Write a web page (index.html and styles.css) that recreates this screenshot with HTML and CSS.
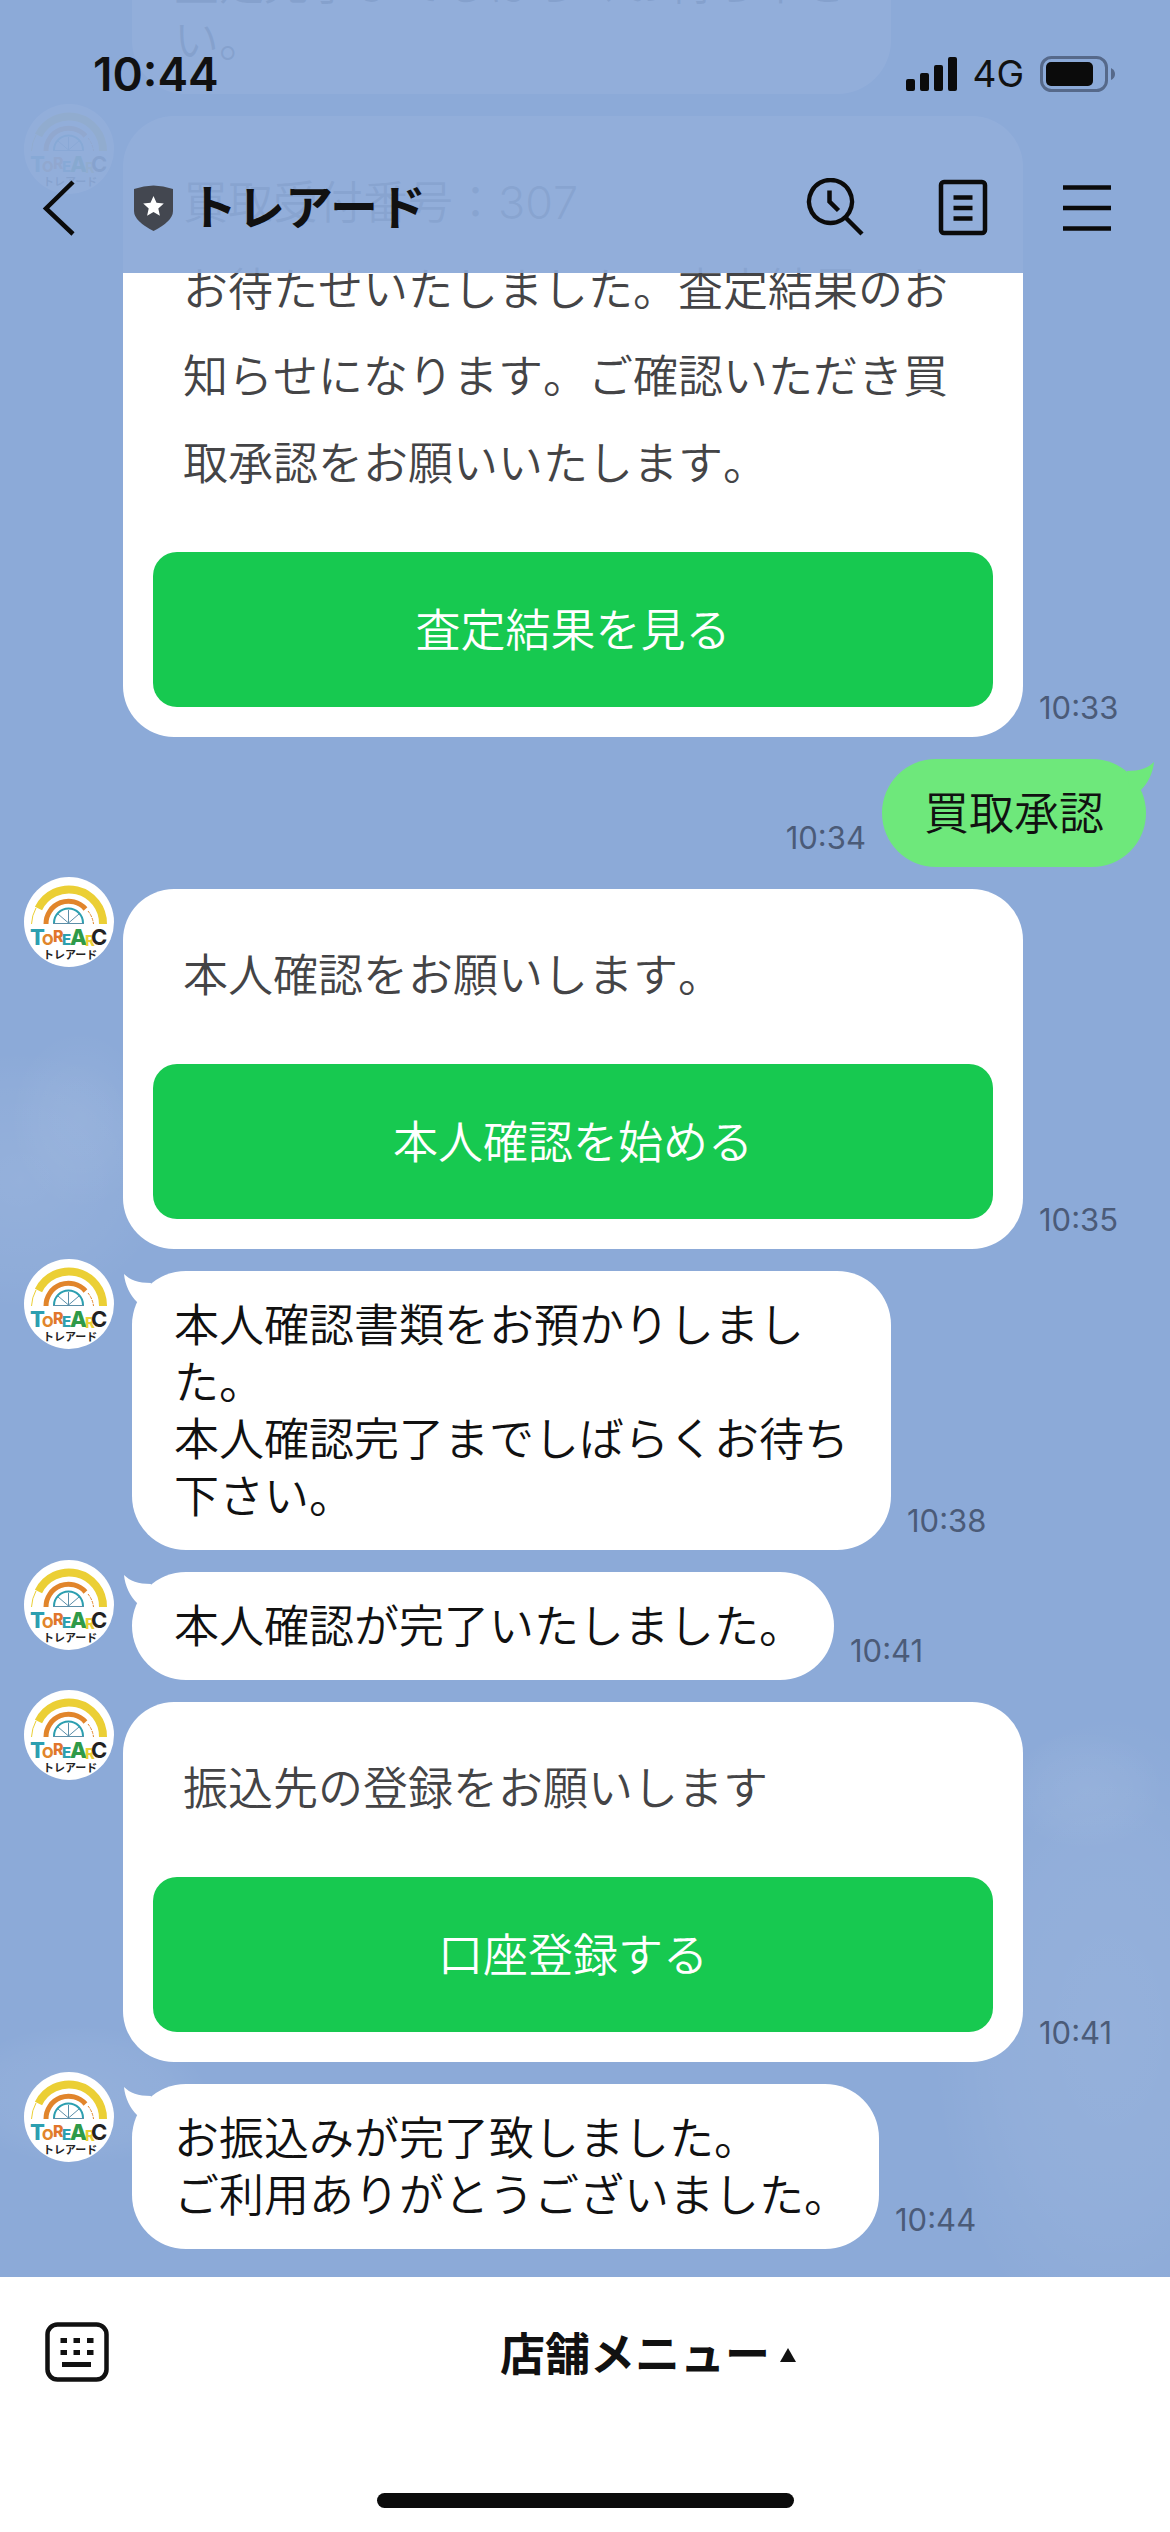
FILE: index.html
```html
<!DOCTYPE html>
<html lang="ja">
<head>
<meta charset="utf-8">
<meta name="viewport" content="width=device-width, initial-scale=1">
<title>トレアード</title>
<link rel="stylesheet" href="styles.css">
</head>
<body>
<svg width="0" height="0" class="defs" aria-hidden="true">
  <defs>
    <symbol id="logo" viewBox="0 0 90 90">
      <circle cx="45" cy="45" r="45" fill="#fff"/>
      <path d="M14.500 31.500A34 34 0 0 1 79 47" fill="none" stroke="#ebcf35" stroke-width="8"/>
      <path d="M7.500 47A37 37 0 0 1 12 31" fill="none" stroke="#ebcf35" stroke-width="1"/>
      <path d="M22 47A22.500 22.500 0 0 1 61.500 32" fill="none" stroke="#e1852b" stroke-width="5"/>
      <path d="M64 34A25 25 0 0 1 69.500 47" fill="none" stroke="#e1852b" stroke-width="1" stroke-dasharray="3 1"/>
      <path d="M30 46A14.500 14.500 0 0 1 59 46" fill="none" stroke="#2c9fb0" stroke-width="2"/>
      <path d="M29 46.500H60M44.500 46V33M44.500 46L34 37M44.500 46L55 37" fill="none" stroke="#5b8ea8" stroke-width="1"/>
      <g font-family="Inter, Liberation Sans, sans-serif" font-weight="800">
        <text x="6" y="68" font-size="22" fill="#2c9fb0">T</text>
        <text x="18" y="68" font-size="15" fill="#e1852b">O</text>
        <text x="29" y="65" font-size="16" fill="#e1752b">R</text>
        <text x="38" y="68" font-size="15" fill="#2c9fb0">E</text>
        <text x="46" y="68" font-size="22" fill="#2f9a48">A</text>
        <text x="61" y="69" font-size="15" fill="#ebcf35">R</text>
        <text x="67" y="68" font-size="22" font-weight="700" fill="#222">C</text>
      </g>
      <text x="19" y="82" font-size="11" font-weight="700" fill="#222" font-family="Noto Sans CJK JP, sans-serif">トレアード</text>
    </symbol>
    <symbol id="tail" viewBox="0 0 36 32">
      <path d="M0 0C6 6 14 9 27 9L24 28H13C6 21 1 11 0 0Z" fill="currentColor"/>
    </symbol>
  </defs>
</svg>

<header class="header">
  <div class="status">
    <time class="status-time">10:44</time>
    <div class="status-icons">
      <svg width="51" height="36" viewBox="0 0 51 36" aria-hidden="true"><path fill="#0b0b0b" d="M2 23h5a2 2 0 0 1 2 2v8a2 2 0 0 1-2 2H2a2 2 0 0 1-2-2v-8a2 2 0 0 1 2-2zM16 17h5a2 2 0 0 1 2 2v14a2 2 0 0 1-2 2h-5a2 2 0 0 1-2-2V19a2 2 0 0 1 2-2zM30 9h5a2 2 0 0 1 2 2v22a2 2 0 0 1-2 2h-5a2 2 0 0 1-2-2V11a2 2 0 0 1 2-2zM44 1h5a2 2 0 0 1 2 2v30a2 2 0 0 1-2 2h-5a2 2 0 0 1-2-2V3a2 2 0 0 1 2-2z"/></svg>
      <span class="status-net">4G</span>
      <svg width="76" height="36" viewBox="0 0 76 36" aria-hidden="true"><rect x="1.500" y="1.500" width="65" height="33" rx="10" fill="none" stroke="#56698a" stroke-width="3"/><rect x="6" y="6" width="47" height="24" rx="5" fill="#0b0b0b"/><path d="M71 12q4 2 4 6t-4 6z" fill="#56698a"/></svg>
    </div>
  </div>
  <div class="nav">
    <button class="icon-btn back" type="button" aria-label="戻る">
      <svg width="36" height="56" viewBox="0 0 36 56" aria-hidden="true"><path d="M33 2L6 28.500L33 54" fill="none" stroke="#0b0b0b" stroke-width="4.500"/></svg>
    </button>
    <svg class="shield" width="39" height="46" viewBox="0 0 39 46" aria-hidden="true"><path d="M0 4Q19.500-3 39 4V26Q39 36 19.500 46Q0 36 0 26Z" fill="#434750"/><path d="M19.500 11l3 6.800 7.300.7-5.500 4.900 1.600 7.400-6.400-3.900-6.400 3.900 1.600-7.400-5.500-4.900 7.300-.7z" fill="#fff"/></svg>
    <h1 class="title">トレアード</h1>
    <div class="tools">
      <button class="icon-btn" type="button" aria-label="検索">
        <svg width="58" height="60" viewBox="0 0 58 60" aria-hidden="true"><path d="M24.500 2a21.500 21.500 0 1 0 .01 0zM23.500 12.500v11l9 9M40 40L56 56" fill="none" stroke="#0b0b0b" stroke-width="4.500"/></svg>
      </button>
      <button class="icon-btn" type="button" aria-label="ノート">
        <svg width="50" height="60" viewBox="0 0 50 60" aria-hidden="true"><rect x="3" y="4" width="44" height="51" rx="3" fill="none" stroke="#0b0b0b" stroke-width="4.500"/><path d="M15.500 19.500h19M15.500 30h19M15.500 40.500h19" stroke="#0b0b0b" stroke-width="4.500"/></svg>
      </button>
      <button class="icon-btn" type="button" aria-label="メニュー">
        <svg width="50" height="60" viewBox="0 0 50 60" aria-hidden="true"><path d="M1 9.500h48M1 30h48M1 50.500h48" stroke="#0b0b0b" stroke-width="4.500"/></svg>
      </button>
    </div>
  </div>
</header>

<main class="chat">
  <div class="row">
    <svg class="avatar" role="img" aria-label="トレアード"><use href="#logo"/></svg>
    <div class="bubble">受付が完了いたしました。<br>査定完了までしばらくお待ち下さ<br>い。</div>
  </div>
  <div class="row">
    <svg class="avatar" role="img" aria-label="トレアード"><use href="#logo"/></svg>
    <section class="card">
      <p class="card-text">買取受付番号：307<br>お待たせいたしました。査定結果のお知らせになります。ご確認いただき買取承認をお願いいたします。</p>
      <button class="card-btn" type="button">査定結果を見る</button>
    </section>
    <time class="stamp">10:33</time>
  </div>
  <div class="row row-mine">
    <time class="stamp">10:34</time>
    <div class="bubble bubble-mine">買取承認<svg class="tail" aria-hidden="true"><use href="#tail"/></svg></div>
  </div>
  <div class="row">
    <svg class="avatar" role="img" aria-label="トレアード"><use href="#logo"/></svg>
    <section class="card">
      <p class="card-text">本人確認をお願いします。</p>
      <button class="card-btn" type="button">本人確認を始める</button>
    </section>
    <time class="stamp">10:35</time>
  </div>
  <div class="row">
    <svg class="avatar" role="img" aria-label="トレアード"><use href="#logo"/></svg>
    <div class="bubble">本人確認書類をお預かりしまし<br>た。<br>本人確認完了までしばらくお待ち<br>下さい。<svg class="tail" aria-hidden="true"><use href="#tail"/></svg></div>
    <time class="stamp">10:38</time>
  </div>
  <div class="row">
    <svg class="avatar" role="img" aria-label="トレアード"><use href="#logo"/></svg>
    <div class="bubble bubble-tight">本人確認が完了いたしました。<svg class="tail" aria-hidden="true"><use href="#tail"/></svg></div>
    <time class="stamp">10:41</time>
  </div>
  <div class="row">
    <svg class="avatar" role="img" aria-label="トレアード"><use href="#logo"/></svg>
    <section class="card">
      <p class="card-text">振込先の登録をお願いします</p>
      <button class="card-btn" type="button">口座登録する</button>
    </section>
    <time class="stamp">10:41</time>
  </div>
  <div class="row">
    <svg class="avatar" role="img" aria-label="トレアード"><use href="#logo"/></svg>
    <div class="bubble bubble-tight">お振込みが完了致しました。<br>ご利用ありがとうございました。<svg class="tail" aria-hidden="true"><use href="#tail"/></svg></div>
    <time class="stamp">10:44</time>
  </div>
</main>

<footer class="footer">
  <div class="footer-bar">
    <button class="icon-btn keyboard" type="button" aria-label="キーボード">
      <svg width="64" height="60" viewBox="0 0 64 60" aria-hidden="true"><rect x="2.500" y="2.500" width="59" height="55" rx="10" fill="none" stroke="#111" stroke-width="4.500"/><path d="M15.500 18.500h6.500M28.500 18.500h6.500M42 18.500h6.500M15.500 30.500h6.500M28.500 30.500h6.500M42 30.500h6.500M17 42.500h29" stroke="#111" stroke-width="5"/></svg>
    </button>
    <button class="menu-btn" type="button">店舗メニュー<svg width="16" height="14" viewBox="0 0 16 14" aria-hidden="true"><path d="M8 0l8 14H0z" fill="#111"/></svg></button>
  </div>
  <div class="home"></div>
</footer>
</body>
</html>
```
FILE: styles.css
```css
* {
  box-sizing: border-box;
}

body {
  margin: 0;
  height: 100vh;
  display: flex;
  flex-direction: column;
  position: relative;
  color: #111;
  background: #8caad8;
  font-family: Inter, "Noto Sans CJK JP", sans-serif;
}

button {
  border: 0;
  padding: 0;
  background: none;
  color: inherit;
  font: inherit;
}

svg {
  display: block;
}

.defs {
  position: absolute;
}

/* translucent bar over the scrolled conversation */
.header {
  position: absolute;
  top: 0;
  left: 0;
  right: 0;
  z-index: 2;
  height: 273px;
  background: rgba(140, 170, 216, 0.95);
}

.status {
  display: flex;
  justify-content: space-between;
  align-items: center;
  padding: 44px 54px 0 93px;
  height: 104px;
}

.status-time {
  font-size: 46px;
  line-height: 60px;
  font-weight: 600;
}

.status-icons {
  display: flex;
  align-items: center;
}

.status-net {
  margin: 0 16px 0 15px;
  font-size: 37px;
  line-height: 44px;
  font-weight: 400;
}

.nav {
  display: flex;
  align-items: center;
  height: 160px;
  padding: 48px 58px 0 40px;
}

.back {
  margin-right: 58px;
}

.title {
  flex: 1;
  margin: 0 0 0 16px;
  font-size: 48px;
  line-height: 60px;
  font-weight: 700;
}

.tools {
  display: flex;
  gap: 74px;
}

.chat {
  flex: 1;
  min-height: 0;
  overflow: hidden;
  display: flex;
  flex-direction: column;
  justify-content: flex-end;
  gap: 22px;
  padding: 0 24px 28px;
  background:
    radial-gradient(ellipse 70px 90px at 80px 1120px, rgba(255, 255, 255, 0.06), rgba(255, 255, 255, 0.04) 50%, transparent),
    radial-gradient(ellipse 150px 130px at 20px 1180px, rgba(255, 255, 255, 0.08), rgba(255, 255, 255, 0.03) 70%, transparent),
    radial-gradient(ellipse 130px 70px at 80px 2095px, rgba(255, 255, 255, 0.07), rgba(255, 255, 255, 0.04) 70%, transparent),
    radial-gradient(ellipse 80px 60px at 1085px 1790px, rgba(255, 255, 255, 0.06), rgba(255, 255, 255, 0.03) 60%, transparent),
    radial-gradient(ellipse 180px 320px at 1110px 2030px, rgba(255, 255, 255, 0.08), rgba(255, 255, 255, 0.05) 60%, transparent),
    #8caad8;
}

.row {
  flex: none;
  display: flex;
  align-items: flex-end;
}

.row-mine {
  justify-content: flex-end;
}

.avatar {
  width: 90px;
  height: 90px;
  flex: none;
  align-self: flex-start;
  margin: -12px 0 0;
}

.card {
  flex: 0 1 900px;
  margin-left: 9px;
  padding: 43px 30px 30px;
  border-radius: 51px;
  background: #fff;
}

.card-text {
  margin: 0 0 45px;
  padding: 0 30px;
  font-size: 45px;
  line-height: 87px;
  font-weight: 350;
  font-kerning: none;
  color: #444446;
}

.card-btn {
  display: block;
  width: 100%;
  height: 155px;
  padding-bottom: 4px;
  border-radius: 24px;
  background: #17c950;
  color: #fff;
  font-size: 45px;
  font-weight: 350;
}

.bubble {
  position: relative;
  margin-left: 18px;
  padding: 26px 42px 25px;
  border-radius: 54px;
  background: #fff;
  font-size: 45px;
  line-height: 57px;
  font-weight: 350;
}

.bubble-tight {
  padding-right: 30px;
}

.bubble-mine {
  margin-left: 0;
  background: #6ee87b;
}

.tail {
  position: absolute;
  top: 3px;
  left: -8px;
  width: 36px;
  height: 32px;
  color: #fff;
}

.bubble-mine .tail {
  left: auto;
  right: -8px;
  color: #6ee87b;
  transform: scaleX(-1);
}

.stamp {
  padding: 0 16px 11px;
  font-size: 31px;
  line-height: 36px;
  color: #4b5b78;
}

.footer {
  height: 255px;
  display: flex;
  flex-direction: column;
  justify-content: space-between;
  padding-bottom: 24px;
  background: #fff;
}

.footer-bar {
  display: flex;
  align-items: center;
  height: 150px;
}

.keyboard {
  margin: 0 17px 0 45px;
}

.menu-btn {
  flex: 1;
  display: flex;
  justify-content: center;
  align-items: center;
  gap: 10px;
  padding-top: 6px;
  font-size: 45px;
  line-height: 60px;
  font-weight: 700;
}

.home {
  align-self: center;
  width: 417px;
  height: 15px;
  border-radius: 8px;
  background: #0b0b0b;
}
```
